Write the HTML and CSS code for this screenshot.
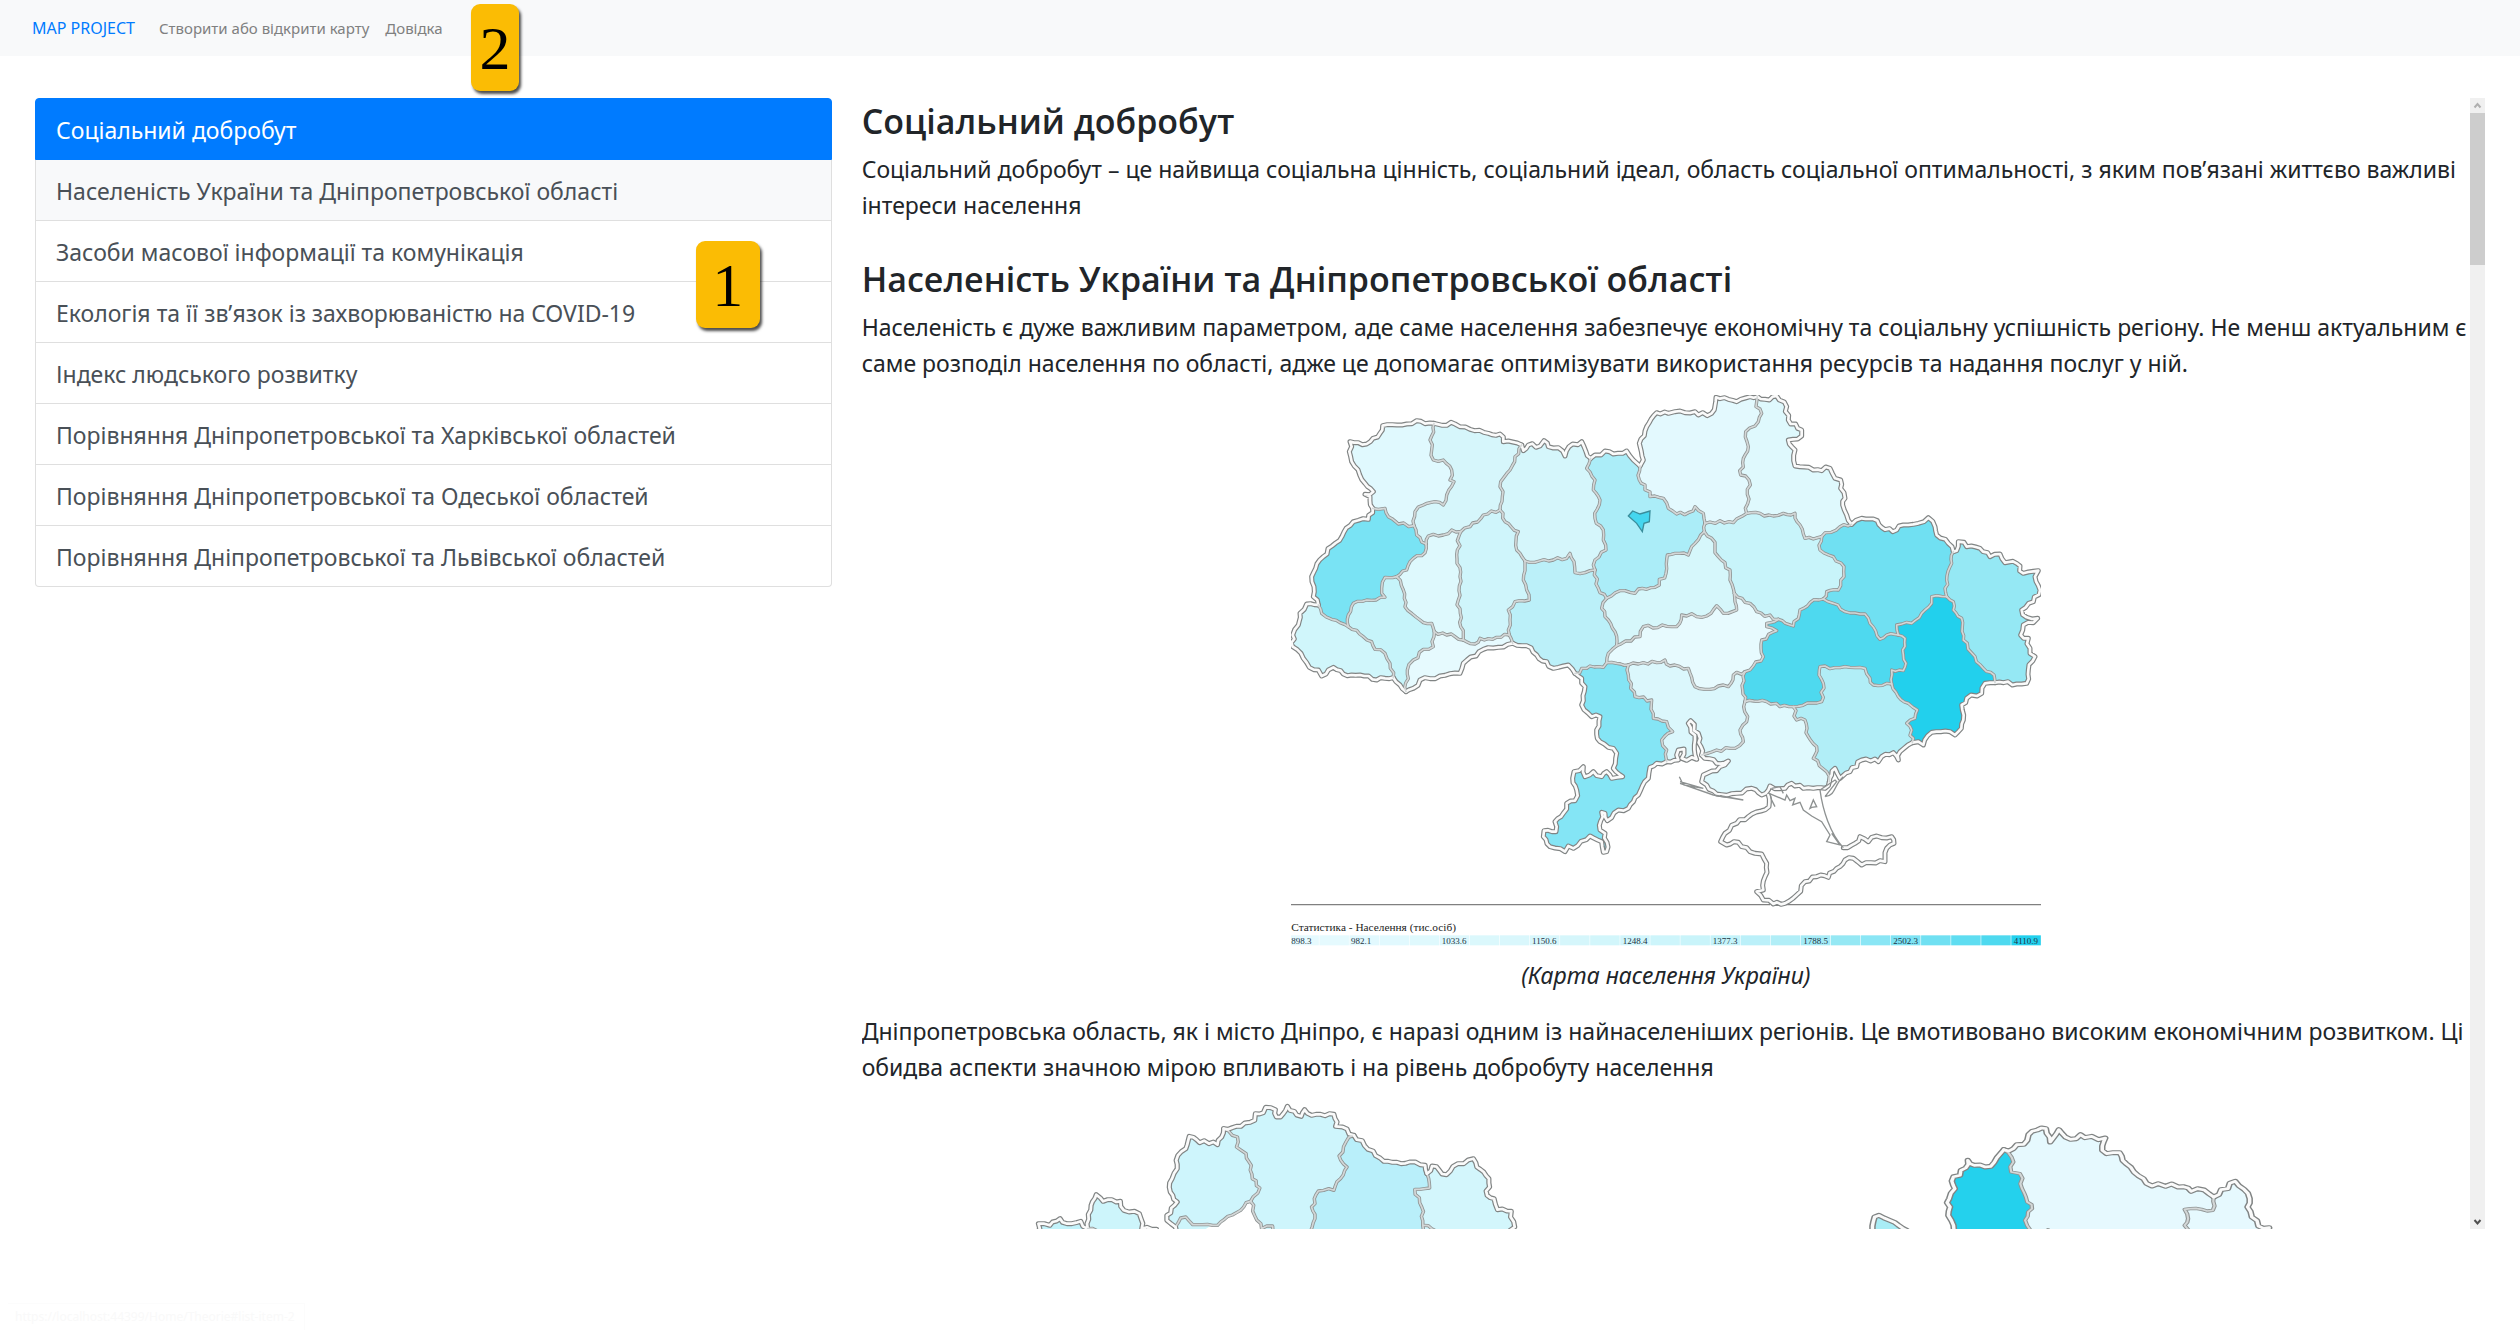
FILE: index.html
```html
<!DOCTYPE html>
<html lang="uk">
<head>
<meta charset="utf-8">
<meta name="viewport" content="width=device-width, initial-scale=1">
<title>MAP PROJECT</title>
<link rel="stylesheet" href="styles.css">
</head>
<body>
<header class="navbar">
  <a class="brand" href="#">MAP PROJECT</a>
  <nav class="nav">
    <a class="nav-link" href="#">Створити або відкрити карту</a>
    <a class="nav-link" href="#">Довідка</a>
  </nav>
  <span class="marker marker-nav">2</span>
</header>

<main class="layout">
  <div class="column">
    <nav class="list-group">
      <a class="item active" href="#list-item-1">Соціальний добробут</a>
      <a class="item hovered" href="#list-item-2">Населеність України та Дніпропетровської області</a>
      <a class="item" href="#list-item-3">Засоби масової інформації та комунікація</a>
      <a class="item" href="#list-item-4">Екологія та її зв’язок із захворюваністю на COVID-19</a>
      <a class="item" href="#list-item-5">Індекс людського розвитку</a>
      <a class="item" href="#list-item-6">Порівняння Дніпропетровської та Харківської областей</a>
      <a class="item" href="#list-item-7">Порівняння Дніпропетровської та Одеської областей</a>
      <a class="item" href="#list-item-8">Порівняння Дніпропетровської та Львівської областей</a>
      <span class="marker marker-list">1</span>
    </nav>
  </div>

  <div class="column reader">
    <article class="article">
      <section class="section" id="list-item-1">
        <h3>Соціальний добробут</h3>
        <p>Соціальний добробут – це найвища соціальна цінність, соціальний ідеал, область соціальної оптимальності, з яким пов’язані життєво важливі<br>інтереси населення</p>
      </section>
      <section class="section" id="list-item-2">
        <h3>Населеність України та Дніпропетровської області</h3>
        <p>Населеність є дуже важливим параметром, аде саме населення забезпечує економічну та соціальну успішність регіону. Не менш актуальним є<br>саме розподіл населення по області, адже це допомагає оптимізувати використання ресурсів та надання послуг у ній.</p>
        <figure class="figure">
          <svg class="map" id="ukraine" viewBox="63 45 2250 1656" role="img" aria-label="Карта населення України"></svg>
          <figcaption>(Карта населення України)</figcaption>
        </figure>
        <p>Дніпропетровська область, як і місто Дніпро, є наразі одним із найнаселеніших регіонів. Це вмотивовано високим економічним розвитком. Ці<br>обидва аспекти значною мірою впливають і на рівень добробуту населення</p>
        <div class="pair">
          <svg class="map-left" id="west" viewBox="-17 63 1568 600" preserveAspectRatio="none" aria-hidden="true"></svg>
          <svg class="map-right" id="east" viewBox="-16 63 1084 600" preserveAspectRatio="none" aria-hidden="true"></svg>
        </div>
      </section>
    </article>
    <div class="scrollbar" aria-hidden="true">
      <svg class="arrow arrow-up" viewBox="0 0 15 15"><path d="M4.500 9.500 7.500 6l3 3.500"/></svg>
      <div class="track"><div class="thumb"></div></div>
      <svg class="arrow arrow-down" viewBox="0 0 15 15"><path d="M4.500 6 7.500 9.500l3-3.500"/></svg>
    </div>
  </div>
</main>
<div class="status">https://localhost:44399/Home/Theorie#list-item-2</div>
<script src="map.js"></script>
</body>
</html>
```
FILE: styles.css
```css
* { box-sizing: border-box; }

body {
  margin: 0;
  min-height: 100vh;
  background: #fff;
  color: #212529;
  font-family: "Noto Sans", "Open Sans", sans-serif;
  font-size: 23px;
  line-height: 36px;
}

a { text-decoration: none; }

.navbar {
  position: relative;
  display: flex;
  align-items: center;
  height: 56px;
  padding: 0 32px;
  gap: 24px;
  background: #f8f9fa;
  font-size: 15px;
  line-height: 24px;
}
.brand { color: #007bff; font-size: 16px; }
.nav { display: flex; gap: 16px; }
.nav-link { color: #7f8080; }

.marker {
  position: absolute;
  display: flex;
  align-items: center;
  justify-content: center;
  height: 87px;
  border-radius: 9px;
  background: #fbbc04;
  box-shadow: 2px 3px 3px rgba(0, 0, 0, .7);
  color: #000;
  font: 62px/1 "Liberation Serif", serif;
}
.marker-nav { left: 471px; top: 4px; width: 48px; }
.marker-list { right: 72px; top: 143px; width: 64px; }

.layout {
  display: grid;
  grid-template-columns: minmax(0, 1fr) minmax(0, 2fr);
  align-items: start;
  padding: 42px 20px 0;
}
.column { padding: 0 15px; }

.list-group {
  position: relative;
  display: flex;
  flex-direction: column;
}
.item {
  padding: 13px 20px 11px;
  border: 1px solid #dfdfdf;
  background: #fff;
  color: #495057;
}
.item + .item { border-top: 0; }
.item:first-child { border-radius: 4px 4px 0 0; }
.item:nth-child(8) { border-radius: 0 0 4px 4px; }
.item.active { background: #007bff; border-color: #007bff; color: #fff; }
.item.hovered { background: #f8f9fa; }

.reader { display: flex; height: 85vh; }
.article { flex: 1; min-width: 0; padding-top: 2px; overflow: hidden; }
.section { padding-bottom: 21px; }

h3 {
  margin: 0 0 8px;
  font-family: "Open Sans", "Noto Sans", sans-serif;
  font-size: 34px;
  line-height: 43px;
  font-weight: 600;
}
p { margin: 0 0 14px; white-space: nowrap; }

.figure { margin: 0 0 20px; text-align: center; }
.map { display: block; width: 750px; max-width: 100%; margin: 0 auto 10px; }
figcaption { font-style: italic; }

.pair {
  display: grid;
  grid-template-columns: 1fr 1fr;
  justify-items: center;
  padding-top: 4px;
}
.map-left { display: block; width: 540px; height: 200px; }
.map-right { display: block; width: 470px; height: 200px; }

.scrollbar {
  display: flex;
  flex-direction: column;
  width: 15px;
  background: #f0f0f0;
}
.track { flex: 1; }
.thumb { height: 152px; background: #cdcdcd; }
.arrow { width: 15px; height: 15px; fill: none; stroke-width: 2; }
.arrow-up { stroke: #b0b0b0; }
.arrow-down { stroke: #505050; }

.casing, .core { fill: none; stroke-linejoin: round; stroke-linecap: round; }
.casing { stroke: #8f9494; stroke-width: 10; }
.core { stroke: #d3d7d7; stroke-width: 5; }
.casing.outer { stroke: #808484; stroke-width: 15; }
.core.outer { stroke: #fafafa; stroke-width: 8; }
.thin { fill: none; stroke: #8d9191; stroke-width: 4; }
.city { fill: #45d6ef; stroke: #3a8d9b; stroke-width: 4; }
.frame { fill: #808080; }
.legend-title { font: 34px "Liberation Serif", serif; fill: #222; }
.legend-label { font: 27px "Liberation Serif", serif; fill: #234; }

.status {
  position: absolute;
  left: 8px;
  bottom: 0;
  height: 27px;
  padding: 0 9px 0 7px;
  border: 1px solid #fcfcfc;
  border-width: 1px 1px 0 0;
  color: #f9f9f9;
  font-size: 12px;
  line-height: 26px;
}
```
FILE: map.js
```js
const NS = 'http://www.w3.org/2000/svg';

function add(svg, tag, attrs, text) {
  const el = document.createElementNS(NS, tag);
  for (const k in attrs) el.setAttribute(k, attrs[k]);
  if (text) el.textContent = text;
  svg.appendChild(el);
}

const parse = s => s.trim().split(/\s+/).map(p => p.split(',').map(Number));

// Splits long segments and shifts the new points sideways, so borders look surveyed.
function roughen(pts) {
  let seed = pts.length * 7 + pts[0][0];
  const rnd = () => (seed = (seed * 9301 + 49297) % 233280) / 233280 - 0.5;
  const out = [pts[0]];
  for (let i = 1; i < pts.length; i++) {
    const [ax, ay] = pts[i - 1], [bx, by] = pts[i];
    const len = Math.hypot(bx - ax, by - ay);
    const n = Math.max(1, Math.round(len / 14));
    for (let j = 1; j < n; j++) {
      const k = rnd() * 11, t = j / n;
      out.push([Math.round(ax + (bx - ax) * t - (by - ay) / len * k), Math.round(ay + (by - ay) * t + (bx - ax) / len * k)]);
    }
    out.push([bx, by]);
  }
  return out;
}

// Regions list their arcs in order; a leading minus walks the arc backwards.
function drawMap(svg, arcs, regions) {
  const lines = {};
  for (const id in arcs) lines[id] = roughen(parse(arcs[id]));
  for (const [fill, list] of regions) {
    const pts = list.split(' ').flatMap(id => id[0] === '-' ? [...lines[id.slice(1)]].reverse() : lines[id]);
    add(svg, 'path', { d: 'M' + pts.join('L') + 'Z', fill });
  }
  for (const kind of ['casing', 'core'])
    for (const id in lines)
      add(svg, 'path', { d: 'M' + lines[id].join('L'), class: kind + (id[0] === 'i' ? '' : ' outer') });
}

const ukraine = document.getElementById('ukraine');
for (const d of ['M63,1572H1500V1576H63Z', 'M1548,1572H2313V1576H1548Z']) add(ukraine, 'path', { d, class: 'frame' });

drawMap(ukraine, {
  o1: '308,385 300,350 285,343 310,335 285,310 245,245 240,185 290,192 330,160 338,137 410,132 440,122 492,130',
  o2: '492,130 555,132 600,148 655,160 690,162 700,185 755,195',
  o3: '755,195 760,212 775,195 810,198 822,182 835,200 865,203 885,228 897,200 935,185 948,215 962,235',
  o4: '962,235 1005,213 1030,222 1070,213 1090,240 1110,258',
  o5: '1110,258 1120,240 1108,190 1130,140 1160,98 1195,100 1215,95 1275,95 1285,105 1325,100 1338,52 1400,65 1440,50 1462,50',
  o6: '1462,50 1485,58 1520,48 1550,80 1555,120 1595,150 1595,168 1555,180 1575,210 1575,258 1630,270 1680,265 1695,295 1712,300 1712,325 1725,355 1718,375 1730,405 1745,433',
  o7: '1745,433 1775,415 1810,417 1835,442 1868,455 1900,435 1945,430 1975,413 1995,440 2000,465 2035,490 2050,515',
  o8: '2050,515 2060,512 2065,485 2082,487 2090,500 2130,505 2160,530 2190,522 2205,548 2240,550 2260,580 2305,572 2295,590 2310,630 2290,665 2255,690 2270,712 2303,715 2290,728 2260,735 2252,765 2275,775 2280,820 2295,830 2275,870 2270,910 2240,912 2175,908',
  o9: '2175,908 2145,910 2135,940 2090,955 2075,975 2080,1020 2065,1055 2055,1065 2040,1055 1985,1057 1960,1095 1945,1085 1927,1088',
  o10: '1927,1088 1890,1115 1885,1140 1870,1118 1835,1130 1825,1145 1815,1137 1775,1140 1740,1175 1710,1195 1695,1165 1685,1185 1678,1205',
  c11: '1678,1205 1665,1225 1630,1225 1600,1225 1565,1210 1545,1225 1500,1218 1475,1245 1445,1225 1400,1240 1340,1242 1310,1215 1295,1205 1300,1185 1340,1172 1375,1143 1340,1150 1295,1125',
  c12: '1295,1125 1290,1075 1262,1022 1255,1030 1275,1080 1280,1138 1235,1135 1242,1107 1225,1110 1225,1140 1190,1145',
  o13: '1190,1145 1160,1150 1140,1162 1135,1195 1105,1245 1075,1285 1045,1290 1012,1322 1005,1300 995,1297 990,1350 1005,1360 1010,1415 1000,1417 995,1385 960,1368 910,1405 895,1398 885,1415 840,1400 820,1370 822,1352 858,1355 855,1325 880,1300 890,1270 915,1262 920,1230 908,1195 912,1175 940,1160 945,1190 970,1175 995,1190 1010,1175 1025,1195 1058,1190 1030,1165 1040,1120 1030,1105 990,1085 980,1050 990,1010 965,1010 935,975 945,920 935,895 915,880',
  o14: '915,880 895,855 850,865 830,845 800,825 770,797 728,790',
  o15: '728,790 640,808 580,850 570,880 510,888 450,900 430,925 408,935',
  o16: '408,935 390,915 370,893',
  o17: '370,893 320,900 270,885 220,882 190,862 175,870 155,888 145,870 118,862 100,835 68,800 68,765 85,735 90,700 110,672 145,675',
  o18: '145,675 130,650 125,590 160,530 250,425 295,418 308,385',
  i1: '492,130 480,180 490,240 520,240 545,270 540,300 552,305 530,345 520,375 495,365 460,375 435,395 432,437',
  i2: '432,437 385,432 355,410 345,385 325,388 308,385',
  i3: '432,437 440,465 468,492',
  i4: '468,492 475,468 520,465 545,450 572,455',
  i5: '572,455 600,440 640,405 690,390',
  i6: '690,390 697,350 692,305 720,270 735,230 755,195',
  i7: '468,492 465,518 430,535 410,570 380,590',
  i8: '380,590 345,592 335,625 345,652 250,670 235,705 235,740',
  i9: '235,740 185,718 155,700 145,675',
  i10: '235,740 280,770 305,785 315,808 345,820 360,850 370,893',
  i11: '380,590 400,630 405,680 450,720 485,730 493,755',
  i12: '493,755 490,800 460,808 430,840 412,870 408,935',
  i13: '493,755 530,765 555,770 580,780',
  i14: '572,455 562,510 570,590 565,660 572,740 580,780',
  i15: '580,780 615,792 630,775 680,772 718,765',
  i16: '690,390 705,425 745,455 740,510 765,543',
  i17: '765,543 760,600 778,660 735,665 715,690 718,765',
  i18: '718,765 728,790',
  i19: '765,543 850,540 890,535 900,520 912,545 915,578 945,578 975,570',
  i20: '962,235 950,265 975,300 970,330 990,360 975,415 1000,450 1008,510 975,540 975,570',
  i21: '975,570 985,625 1010,655',
  i22: '1010,655 1050,632 1095,640 1105,627 1155,622 1188,580 1192,525 1215,520 1255,525 1275,490 1303,455',
  i23: '1305,430 1303,455',
  i24: '1110,258 1108,300 1125,315 1140,350 1180,355 1195,385 1220,402 1255,398 1275,380 1300,400 1305,430',
  i25: '1305,430 1350,422 1390,428 1430,400',
  i26: '1430,400 1437,300 1412,285 1420,235 1435,200 1427,155 1465,125 1475,100 1458,80 1462,50',
  i27: '1430,400 1510,408 1540,400 1575,400 1590,435 1605,475 1655,470',
  i28: '1655,470 1710,440 1745,433',
  i29: '1655,470 1650,510 1690,530 1722,560 1722,590 1705,630 1670,635 1660,657',
  i30: '1303,455 1325,475 1345,530 1380,570 1380,600 1393,640',
  i31: '1393,640 1440,670 1460,695 1525,718',
  i32: '1525,718 1570,738 1590,690 1620,668 1660,657',
  i33: '1393,640 1400,690 1360,700 1340,677 1310,708 1235,705 1220,740 1120,740 1110,770 1040,797',
  i34: '1010,655 995,685 1015,720 1035,755 1040,797',
  i35: '1040,797 1015,820 1010,848',
  i36: '1010,848 1000,862 960,858 915,880',
  i37: '1010,848 1040,850 1075,855',
  i38: '1075,855 1120,848 1185,840 1200,858 1255,865 1275,920 1305,928 1345,918 1375,920 1390,885 1425,875',
  i39: '1075,855 1075,885 1095,950 1145,960 1150,1015 1190,1025 1208,1055 1175,1080 1190,1110 1190,1145',
  i40: '1525,718 1490,730 1490,740 1520,752 1475,780 1480,830 1450,858 1425,875',
  i41: '1425,875 1418,930 1425,965',
  i42: '1425,965 1430,1025 1410,1050 1420,1085 1395,1105 1340,1110 1295,1125',
  i43: '1425,965 1490,965 1530,980 1570,980',
  i44: '1570,980 1655,965 1660,910 1648,870 1650,860 1740,862 1785,865 1800,895 1810,915 1865,912',
  i45: '1570,980 1580,1020 1605,1020 1615,1070 1640,1100 1630,1135 1670,1175 1678,1205',
  i46: '1660,657 1690,670 1725,695 1785,702 1800,730 1830,778 1850,765 1885,765',
  i47: '1885,765 1880,735 1925,730 1955,700 1985,670 1985,650 2030,650',
  i48: '2030,650 2030,600 2045,550 2050,515',
  i49: '2030,650 2050,665 2050,690 2075,715 2080,780 2115,830 2140,865 2172,885 2175,908',
  i50: '1885,765 1905,775 1898,810 1908,850 1900,872 1865,870 1865,912',
  i51: '1865,912 1885,950 1915,970 1942,990 1935,1015 1910,1030 1930,1075 1927,1088',
  o52: '1495,1245 1497,1280 1435,1310 1400,1330 1365,1360 1352,1385 1370,1395 1405,1387 1455,1420 1475,1422 1490,1450 1485,1490 1480,1530 1460,1535 1480,1560 1510,1572 1545,1570 1580,1545 1605,1505 1640,1490 1675,1492 1700,1465 1725,1440 1750,1435 1775,1455 1845,1445 1850,1405 1872,1390 1865,1370 1820,1368 1795,1385 1770,1370 1755,1390 1720,1403'
}, [
  ['#e0f9fe', 'o1 i1 i2'], ['#d6f6fb', 'o2 -i6 -i5 -i4 -i3 -i1'], ['#d5f6fb', 'o3 i20 -i19 -i16 i6'],
  ['#abedf8', 'o4 i24 i23 -i22 -i21 -i20'], ['#e3f9fe', 'o5 -i26 -i25 -i24'], ['#dff9fd', 'o6 -i28 -i27 i26'],
  ['#79e3f4', 'o18 -i2 i3 i7 i8 i9'], ['#def9fd', 'i4 i14 -i13 -i11 -i7'], ['#cff5fb', 'i5 i16 i17 -i15 -i14'],
  ['#bbf0f9', 'i19 i21 i34 i35 i36 o14 -i18 -i17'], ['#d0f6fb', 'o17 -i9 i10'], ['#c6f4fa', '-i8 i11 i12 o16 -i10'],
  ['#e6fafe', 'i13 i15 i18 o15 -i12'], ['#d6f7fb', 'i22 i30 i33 -i34'], ['#e7fafe', '-i33 i31 i40 -i38 -i37 -i35'],
  ['#c8f4fa', 'i25 i27 i29 -i32 -i31 -i30 -i23'], ['#70e0f2', 'o7 -i48 -i47 -i46 -i29 i28'], ['#95e8f4', 'o8 -i49 i48'],
  ['#22d0ed', 'o9 -i51 -i50 i47 i49'], ['#4ed9ef', 'i32 i46 i50 -i44 -i43 -i41 -i40'], ['#b1eef7', 'i44 i51 o10 -i45'],
  ['#dff9fd', 'i43 i45 c11 -i42'], ['#dbf7fc', 'i38 i41 i42 c12 -i39'], ['#84e5f5', 'i37 i39 o13 -i36']
]);

for (const d of [
  'M1497,1240 1545,1260 1550,1245 1560,1262 1575,1255 1568,1275 1590,1267 1600,1290 1625,1308 1655,1325 1680,1365 1670,1385 1710,1395 1685,1360M1650,1230C1658,1290 1680,1360 1720,1403',
  'M1228,1190 1240,1215 1300,1225 1230,1205M1230,1210 1330,1245 1420,1260 1350,1247M1665,1250C1700,1245 1690,1215 1720,1190M1665,1250 1700,1205 1695,1200 1650,1230',
  'M1620,1285 1630,1260 1640,1280 1625,1282ZM1505,1225 1530,1220 1540,1240M1500,1242 1505,1260 1515,1280'
]) add(ukraine, 'path', { d, class: 'thin' });
add(ukraine, 'path', { d: 'M1075,408 1088,393 1110,402 1140,393 1138,425 1122,430 1117,455 1100,430Z', class: 'city' });

add(ukraine, 'text', { x: 64, y: 1652, class: 'legend-title' }, 'Статистика - Населення (тис.осіб)');
const shades = ['e6fafe', 'e5fafe', 'e2f9fe', 'e1f9fe', 'dff9fd', 'ddf8fd', 'dbf8fc', 'd9f7fc', 'd7f7fc', 'd5f6fb', 'd2f6fb', 'd0f5fb', 'cdf5fb', 'c9f4fa', 'c4f3fa', 'bbf0f9', 'b1eef7', 'a4ebf6', '95e8f4', '8ae6f5', '7de3f4', '70e0f2', '5fddf1', '4ed9ef', '22d0ed'];
shades.forEach((c, i) => add(ukraine, 'rect', { x: 58 + i * 90.25, y: 1666, width: 88.5, height: 30, fill: '#' + c }));
[[64, '898.3'], [243, '982.1'], [515, '1033.6'], [786, '1150.6'], [1058, '1248.4'], [1328, '1377.3'], [1600, '1788.5'], [1870, '2502.3'], [2231, '4110.9']]
  .forEach(([x, t]) => add(ukraine, 'text', { x, y: 1692, class: 'legend-label' }, t));

drawMap(document.getElementById('west'), {
  o1: '110,500 112,425 145,430 175,410 195,425 235,418 255,440',
  o2: '255,440 265,370 280,338 300,358 350,358 360,385 405,395 412,440 455,442 460,500',
  i3: '255,440 280,445 290,500',
  o4: '510,435 485,415 485,400 515,360 495,330 500,290 515,260 512,235 540,200 550,163 580,182 620,180 632,188 650,140',
  i5: '650,140 690,165 687,195 715,215 730,250 733,290 755,318 728,358',
  i6: '728,358 632,430 560,428 540,405 525,408 510,435',
  o7: '650,140 700,133 740,115 742,95 765,92 772,76 800,83 803,105 815,105 835,73 875,103 885,83 905,100 970,97 975,133 995,135 1028,160',
  i8: '1028,160 1005,180 985,222 1008,255 970,325 925,327 905,375 915,410 903,446 900,500',
  i9: '790,500 792,432 760,440 728,358',
  o10: '1028,160 1115,238 1165,245 1190,240 1235,250 1240,275',
  i11: '1240,275 1248,318 1205,322 1225,375 1228,430 1230,500',
  o12: '1240,275 1255,252 1297,278 1330,245 1375,230 1385,255 1420,290 1415,340 1435,350 1445,383 1485,388 1483,405 1495,435 1480,446 1480,500',
  o13: '510,435 505,500',
  i14: '1230,430 1265,446 1290,500'
}, [
  ['#c3f3fb', 'o1 i3'], ['#cdf5fb', 'o2 -i3'], ['#cef5fc', 'o4 i5 i6'], ['#cef5fc', 'o7 i8 i9 -i5'],
  ['#b9effa', 'o10 i11 -i8'], ['#d3f6fc', 'o12 -i11'], ['#cdf5fb', '-i9 i6 o13']
]);

drawMap(document.getElementById('east'), {
  o1: '70,500 75,446 80,405 90,400 115,415 155,446 200,500',
  o2: '262,500 262,430 250,400 252,350 265,320 258,297 290,258 295,235 310,250 348,253 378,203',
  i3: '378,203 400,240 395,270 415,275 420,320 432,360 443,380 427,415 440,446 440,500',
  o4: '378,203 400,200 432,175 435,158 465,138 475,140 485,180 505,143 532,172 545,170 555,158 565,167 612,168 605,205 615,215 645,212 660,245 720,312 765,306 780,315 803,318 810,328 825,320 862,345',
  i5: '862,345 860,385 795,382 803,410 795,430 805,446 805,500',
  o6: '862,345 912,298 945,350 940,375 950,405 965,432 990,437 997,500',
  i7: '470,500 480,443 490,500'
}, [
  ['#a9edf6', 'o1'], ['#24d1ed', 'o2 i3'], ['#e6f9fe', 'o4 i5 -i3'], ['#e6f9fe', 'o6 -i5']
]);
```
